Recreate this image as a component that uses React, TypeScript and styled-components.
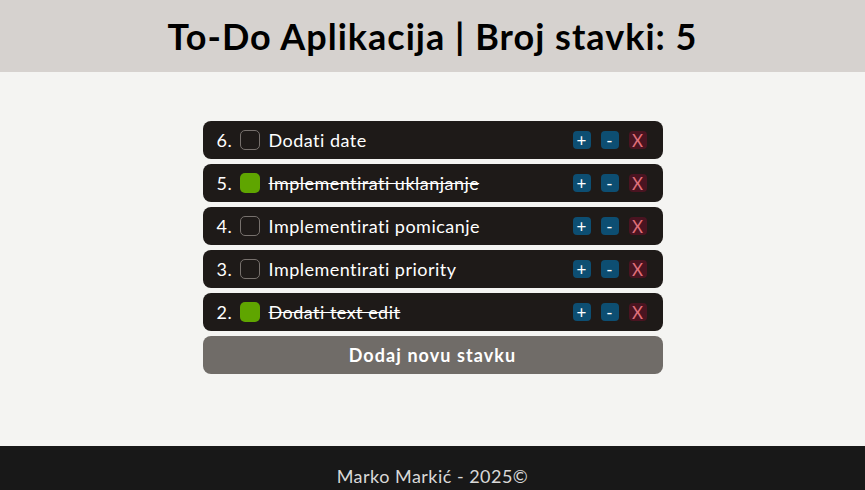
import React, { useState } from "react";
import styled, { createGlobalStyle } from "styled-components";

const Global = createGlobalStyle`
  html, body { margin: 0; padding: 0; }
  body { font-family: "Lato", "Open Sans", sans-serif; background: #f4f4f2; letter-spacing: 0.03em; }
  button { letter-spacing: 0.03em; }
`;

const Page = styled.div`
  display: flex;
  flex-direction: column;
  width: 865px;
  height: 490px;
  overflow: hidden;
`;

const Header = styled.header`
  height: 72px;
  background: #d6d2cf;
  display: flex;
  align-items: center;
  justify-content: center;
`;

const Title = styled.h1`
  margin: 0;
  font-size: 36px;
  font-weight: 700;
  letter-spacing: 0.028em;
  color: #000;
`;

const Main = styled.main`
  height: 374px;
  background: #f4f4f2;
  display: flex;
  justify-content: center;
  padding-top: 49px;
  box-sizing: border-box;
`;

const List = styled.div`
  width: 460px;
  display: flex;
  flex-direction: column;
  gap: 5px;
`;

const Row = styled.div`
  height: 38px;
  background: #1e1a18;
  border-radius: 8px;
  display: flex;
  align-items: center;
  padding: 0 16px 0 14px;
  color: #fff;
  font-size: 18px;
`;

const Num = styled.span`
  width: 23px;
`;

const Check = styled.span<{ $on: boolean }>`
  width: 20px;
  height: 20px;
  box-sizing: border-box;
  border-radius: 5px;
  border: ${(p) => (p.$on ? "none" : "1.5px solid #77716d")};
  background: ${(p) => (p.$on ? "#5fa500" : "transparent")};
  margin-right: 9px;
`;

const Text = styled.span<{ $done: boolean }>`
  flex: 1;
  text-decoration: ${(p) => (p.$done ? "line-through" : "none")};
`;

const Btns = styled.div`
  display: flex;
  gap: 10px;
`;

const Btn = styled.button<{ $kind: "blue" | "red" }>`
  width: 18px;
  height: 18px;
  border: none;
  border-radius: 4px;
  padding: 0;
  display: flex;
  align-items: center;
  justify-content: center;
  font-family: "Lato", sans-serif;
  font-size: 17px;
  line-height: 1;
  letter-spacing: 0;
  background: ${(p) => (p.$kind === "blue" ? "#0d4e72" : "#4a1421")};
  color: ${(p) => (p.$kind === "blue" ? "#ffffff" : "#e0707a")};
`;

const AddBtn = styled.button`
  height: 38px;
  border: none;
  border-radius: 8px;
  background: #706c68;
  color: #fff;
  font-family: "Lato", sans-serif;
  font-size: 18px;
  font-weight: 700;
  letter-spacing: 0.06em;
`;

const Footer = styled.footer`
  height: 44px;
  background: #181818;
  color: #d8d8d8;
  font-size: 18px;
  text-align: center;
  padding-top: 19px;
  box-sizing: border-box;
`;

const items = [
  { n: 6, t: "Dodati date", d: false },
  { n: 5, t: "Implementirati uklanjanje", d: true },
  { n: 4, t: "Implementirati pomicanje", d: false },
  { n: 3, t: "Implementirati priority", d: false },
  { n: 2, t: "Dodati text edit", d: true },
];

export default function App() {
  const [list] = useState(items);
  return (
    <Page>
      <Global />
      <Header>
        <Title>To-Do Aplikacija | Broj stavki: {list.length}</Title>
      </Header>
      <Main>
        <List>
          {list.map((it) => (
            <Row key={it.n}>
              <Num>{it.n}.</Num>
              <Check $on={it.d} />
              <Text $done={it.d}>{it.t}</Text>
              <Btns>
                <Btn $kind="blue">+</Btn>
                <Btn $kind="blue">-</Btn>
                <Btn $kind="red">X</Btn>
              </Btns>
            </Row>
          ))}
          <AddBtn>Dodaj novu stavku</AddBtn>
        </List>
      </Main>
      <Footer>Marko Markić - 2025©</Footer>
    </Page>
  );
}
